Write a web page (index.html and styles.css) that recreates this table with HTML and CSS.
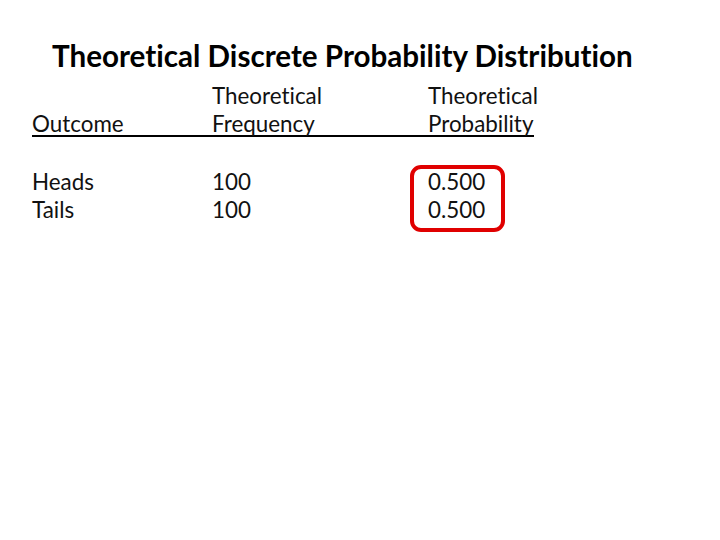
FILE: index.html
```html
<!DOCTYPE html>
<html>
<head>
<meta charset="utf-8">
<link rel="stylesheet" href="styles.css">
</head>
<body>
<div class="slide">
  <h1 class="title">Theoretical Discrete Probability Distribution</h1>
  <div class="table">
    <div class="head">
      <div class="cell c1">Outcome</div>
      <div class="cell c2">Theoretical<br>Frequency</div>
      <div class="cell c3">Theoretical<br>Probability</div>
    </div>
    <div class="body">
      <div class="cell c1">Heads<br>Tails</div>
      <div class="cell c2">100<br>100</div>
      <div class="cell c3"><span class="circled">0.500<br>0.500</span></div>
    </div>
  </div>
</div>
</body>
</html>
```
FILE: styles.css
```css
html, body {
  margin: 0;
  padding: 0;
  background: #fff;
}
.slide {
  width: 720px;
  height: 540px;
  font-family: "Lato", "Open Sans", sans-serif;
  font-variant-ligatures: none;
  color: #000;
}
.title {
  margin: 0;
  padding: 38px 0 0 52px;
  font-size: 29.6px;
  font-weight: bold;
  line-height: 36px;
}
.table {
  padding: 8px 0 0 32px;
  font-size: 22.4px;
  line-height: 28px;
  color: #111;
}
.head, .body {
  display: grid;
  grid-template-columns: 180px 216px 110px;
}
.head {
  align-items: end;
  width: 502px;
  border-bottom: 2px solid #000;
}
.head .cell {
  margin-bottom: -3px;
}
.body {
  margin-top: 31px;
}
.circled {
  display: inline-block;
  position: relative;
}
.circled::after {
  content: "";
  position: absolute;
  left: -18px;
  top: -3px;
  width: 87px;
  height: 59px;
  border: 4px solid #e00000;
  border-radius: 11px;
}
```
